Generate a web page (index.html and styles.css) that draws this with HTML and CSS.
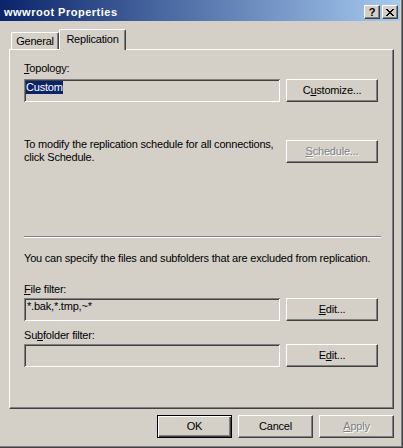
FILE: index.html
```html
<!DOCTYPE html>
<html lang="en">
<head>
  <meta charset="UTF-8">
  <title>wwwroot Properties</title>
  <link rel="stylesheet" href="styles.css">
</head>
<body>
  <div class="window">
    <div class="titlebar">
      <span class="title">wwwroot Properties</span>
      <div class="caption-btns">
        <div class="cap-btn help">?</div>
        <div class="cap-btn close">
          <svg width="8" height="7" viewBox="0 0 8 7" shape-rendering="crispEdges">
            <path fill="#000" d="M0 0h2v1H0zM6 0h2v1H6zM1 1h2v1H1zM5 1h2v1H5zM2 2h4v1H2zM3 3h2v1H3zM2 4h4v1H2zM1 5h2v1H1zM5 5h2v1H5zM0 6h2v1H0zM6 6h2v1H6z"/>
          </svg>
        </div>
      </div>
    </div>

    <div class="dialog">
      <div class="tabs">
        <div class="tab">General</div>
        <div class="tab selected">Replication</div>
      </div>

      <div class="panel">
        <div class="label first"><u>T</u>opology:</div>
        <div class="row">
          <div class="field"><span class="selection">Custom</span></div>
          <div class="btn">C<u>u</u>stomize...</div>
        </div>

        <div class="row schedule-row">
          <p class="note">To modify the replication schedule for all connections,<br>click Schedule.</p>
          <div class="btn disabled"><u>S</u>chedule...</div>
        </div>

        <div class="separator"></div>

        <p class="note filters-note">You can specify the files and subfolders that are excluded from replication.</p>

        <div class="label file-label"><u>F</u>ile filter:</div>
        <div class="row tight">
          <div class="field plain">*.bak,*.tmp,~*</div>
          <div class="btn"><u>E</u>dit...</div>
        </div>

        <div class="label sub-label">Su<u>b</u>folder filter:</div>
        <div class="row tight">
          <div class="field plain"></div>
          <div class="btn">E<u>d</u>it...</div>
        </div>
      </div>

      <div class="footer">
        <div class="btn wide default">OK</div>
        <div class="btn wide">Cancel</div>
        <div class="btn wide disabled"><u>A</u>pply</div>
      </div>
    </div>
  </div>
</body>
</html>
```

FILE: styles.css
```css
* {
  box-sizing: border-box;
}

body {
  margin: 0;
  background: #d4d0c8;
  font-family: "Liberation Sans", Arial, sans-serif;
  font-size: 11px;
  letter-spacing: -0.2px;
  color: #000;
}

/* window frame (left/top edges are cropped off) */
.window {
  width: 403px;
  height: 448px;
  background: #d4d0c8;
  border-right: 1px solid #404040;
  border-bottom: 1px solid #404040;
  box-shadow: inset -1px -1px #808080;
  padding: 0 2px 2px 0;
}

.titlebar {
  height: 21px;
  display: flex;
  justify-content: space-between;
  align-items: flex-start;
  padding: 0 2px 0 4px;
  background: linear-gradient(to right, #0a246a, #a6caf0);
}

.title {
  margin-top: 5px;
  line-height: 14px;
  font-size: 11px;
  font-weight: bold;
  letter-spacing: 0.5px;
  color: #fff;
}

.caption-btns {
  display: flex;
  gap: 2px;
  margin-top: 5px;
}

.cap-btn {
  width: 16px;
  height: 14px;
  display: flex;
  justify-content: center;
  align-items: center;
  background: #d4d0c8;
  border: 1px solid;
  border-color: #fff #404040 #404040 #fff;
  box-shadow: inset -1px -1px #808080;
}

.cap-btn.help {
  font-weight: bold;
  font-size: 11px;
  line-height: 12px;
  letter-spacing: 0;
}

.dialog {
  padding: 8px 6px 0 9px;
}

/* tabs */
.tabs {
  display: flex;
  align-items: flex-end;
  height: 20px;
  padding-left: 2px;
  position: relative;
  z-index: 1;
}

.tab {
  height: 17px;
  width: 48px;
  padding-top: 2px;
  line-height: 13px;
  text-align: center;
  border-top: 1px solid #fff;
  border-left: 1px solid #fff;
  border-right: 1px solid #404040;
  border-top-left-radius: 2px;
  border-top-right-radius: 2px;
  box-shadow: inset -1px 0 #808080;
  background: #d4d0c8;
}

.tab.selected {
  width: 67px;
  height: 21px;
  margin-bottom: -1px;
  padding-top: 3px;
}

/* tab page */
.panel {
  width: 385px;
  height: 360px;
  padding: 12px 14px 0 14px;
  border: 1px solid;
  border-color: #fff #404040 #404040 #fff;
  box-shadow: inset -1px -1px #808080;
}

.label {
  line-height: 13px;
}

.file-label {
  margin-top: 18px;
}

.sub-label {
  margin-top: 8px;
}

.row {
  display: flex;
  gap: 6px;
  margin-top: 4px;
}

.row.tight {
  margin-top: 2px;
}

.schedule-row {
  margin-top: 36px;
  align-items: flex-start;
}

.schedule-row .btn {
  margin-top: 2px;
}

.note {
  margin: 0;
  width: 256px;
  line-height: 13px;
  white-space: nowrap;
}

.filters-note {
  width: auto;
  margin-top: 14px;
}

.separator {
  height: 2px;
  margin: 72px -2px 0 0;
  border-top: 1px solid #808080;
  border-bottom: 1px solid #fff;
}

.field {
  width: 256px;
  height: 23px;
  padding: 2px 2px;
  line-height: 13px;
  background: #d4d0c8;
  box-shadow: inset 1px 1px #808080, inset -1px -1px #fff, inset 2px 2px #404040, inset -2px -2px #d4d0c8;
}

.field.plain {
  padding-left: 3px;
}

.selection {
  display: inline-block;
  background: #0a246a;
  color: #fff;
}

/* push buttons */
.btn {
  width: 92px;
  height: 23px;
  display: flex;
  justify-content: center;
  align-items: center;
  line-height: 13px;
  background: #d4d0c8;
  border: 1px solid;
  border-color: #fff #404040 #404040 #fff;
  box-shadow: inset -1px -1px #808080;
}

.btn.disabled {
  color: #808080;
  text-shadow: 1px 1px #fff;
}

.footer {
  display: flex;
  justify-content: flex-end;
  gap: 6px;
  margin-top: 6px;
  width: 385px;
}

.btn.wide {
  width: 75px;
}

.btn.default {
  border: 1px solid #000;
  box-shadow: inset 1px 1px #fff, inset -1px -1px #404040, inset -2px -2px #808080;
}
```
